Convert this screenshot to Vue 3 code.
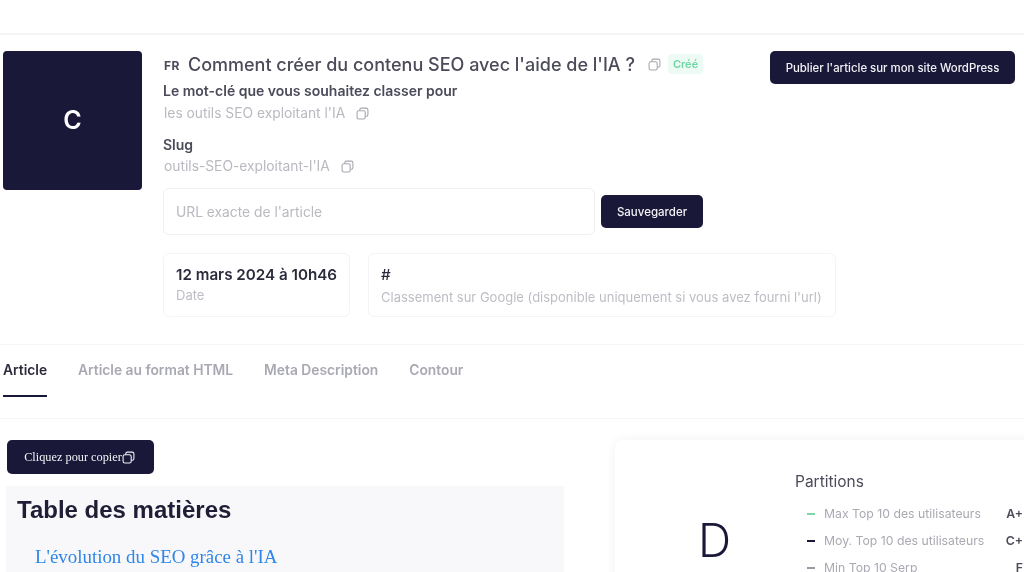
<script setup>
const tabs = ['Article', 'Article au format HTML', 'Meta Description', 'Contour']

const partitions = [
  { label: 'Max Top 10 des utilisateurs', grade: 'A+', color: '#7fd6ad' },
  { label: 'Moy. Top 10 des utilisateurs', grade: 'C+', color: '#1a1838' },
  { label: 'Min Top 10 Serp', grade: 'F', color: '#9a9aa6' },
]
</script>

<template>
  <div class="page">
    <header class="article-head">
      <div class="thumb">C</div>

      <div class="info">
        <div class="title-row">
          <span class="lang">FR</span>
          <h1 class="title">Comment créer du contenu SEO avec l'aide de l'IA ?</h1>
          <svg class="copy title-copy" viewBox="0 0 12 12"><rect x="1" y="3.5" width="7.5" height="7.5" rx="1.6" /><path d="M3.5 3.5V2.6A1.6 1.6 0 0 1 5.1 1h4.3A1.6 1.6 0 0 1 11 2.6v4.3a1.6 1.6 0 0 1-1.6 1.6h-.9" /></svg>
          <span class="status">Créé</span>
        </div>

        <div class="label keyword-label">Le mot-clé que vous souhaitez classer pour</div>
        <div class="value">
          les outils SEO exploitant l'IA
          <svg class="copy" viewBox="0 0 12 12"><rect x="1" y="3.5" width="7.5" height="7.5" rx="1.6" /><path d="M3.5 3.5V2.6A1.6 1.6 0 0 1 5.1 1h4.3A1.6 1.6 0 0 1 11 2.6v4.3a1.6 1.6 0 0 1-1.6 1.6h-.9" /></svg>
        </div>

        <div class="label slug-label">Slug</div>
        <div class="value slug-value">
          outils-SEO-exploitant-l'IA
          <svg class="copy" viewBox="0 0 12 12"><rect x="1" y="3.5" width="7.5" height="7.5" rx="1.6" /><path d="M3.5 3.5V2.6A1.6 1.6 0 0 1 5.1 1h4.3A1.6 1.6 0 0 1 11 2.6v4.3a1.6 1.6 0 0 1-1.6 1.6h-.9" /></svg>
        </div>

        <div class="url-row">
          <div class="url-input">URL exacte de l'article</div>
          <button class="btn save">Sauvegarder</button>
        </div>

        <div class="stats">
          <div class="stat date">
            <strong>12 mars 2024 à 10h46</strong>
            <span>Date</span>
          </div>
          <div class="stat rank">
            <strong>#</strong>
            <span>Classement sur Google (disponible uniquement si vous avez fourni l'url)</span>
          </div>
        </div>
      </div>

      <button class="btn publish">Publier l'article sur mon site WordPress</button>
    </header>

    <nav class="tabs">
      <a v-for="(tab, i) in tabs" :key="tab" class="tab" :class="{ active: i === 0 }">{{ tab }}</a>
    </nav>

    <section class="content">
      <div class="article">
        <button class="btn copy-btn">
          Cliquez pour copier<svg class="copy" viewBox="0 0 12 12"><rect x="1" y="3.5" width="7.5" height="7.5" rx="1.6" /><path d="M3.5 3.5V2.6A1.6 1.6 0 0 1 5.1 1h4.3A1.6 1.6 0 0 1 11 2.6v4.3a1.6 1.6 0 0 1-1.6 1.6h-.9" /></svg>
        </button>
        <div class="toc">
          <h2>Table des matières</h2>
          <a>L'évolution du SEO grâce à l'IA</a>
        </div>
      </div>

      <aside class="score">
        <div class="grade">D</div>
        <div class="partitions">
          <h3>Partitions</h3>
          <div v-for="p in partitions" :key="p.label" class="partition">
            <i :style="{ background: p.color }"></i>
            <span>{{ p.label }}</span>
            <b>{{ p.grade }}</b>
          </div>
        </div>
      </aside>
    </section>
  </div>
</template>

<style>
html, body {
  margin: 0;
  background: #fff;
}
</style>

<style scoped>
.page {
  width: 1024px;
  height: 572px;
  overflow: hidden;
  box-sizing: border-box;
  padding-top: 33px;
  font-family: Inter, "Liberation Sans", sans-serif;
  background: #fff;
  color: #1a1838;
  filter: blur(0.45px);
}

.article-head {
  display: flex;
  align-items: flex-start;
  border-top: 2px solid #f3f4f6;
  padding: 16px 0 0 3px;
  height: 312px;
  box-sizing: border-box;
  border-bottom: 1px solid #f5f5f7;
}

.thumb {
  flex: none;
  width: 139px;
  height: 139px;
  margin-right: 21px;
  padding-bottom: 1px;
  box-sizing: border-box;
  display: flex;
  align-items: center;
  justify-content: center;
  background: #1a1838;
  border-radius: 4px;
  color: #fff;
  font-size: 25px;
  font-weight: 600;
}

.info {
  flex: none;
  width: 606px;
}

.title-row {
  display: flex;
  align-items: center;
  height: 26px;
}

.lang {
  font-size: 12px;
  font-weight: 700;
  letter-spacing: 0.5px;
  color: #4b4b5a;
  margin: 2px 8px 0 1px;
}

.title {
  margin: 0;
  font-size: 18px;
  font-weight: 500;
  color: #4b4b5a;
  white-space: nowrap;
}

.title-copy {
  margin: 0 7px 0 13px;
}

.copy {
  width: 13px;
  height: 13px;
  fill: none;
  stroke: #a6a6ae;
  stroke-width: 1;
}

.status {
  display: inline-flex;
  align-items: center;
  height: 20px;
  padding: 0 5px;
  border-radius: 4px;
  background: #edfbf4;
  color: #6fd6a4;
  font-size: 11px;
  font-weight: 600;
}

.label {
  font-size: 14px;
  font-weight: 600;
  color: #4b4b5a;
  line-height: 18px;
}

.keyword-label {
  margin-top: 5px;
}

.slug-label {
  margin-top: 14px;
}

.value {
  display: flex;
  align-items: center;
  gap: 11px;
  margin-top: 4px;
  padding-left: 1px;
  font-size: 13.8px;
  line-height: 18px;
  color: #b9b9c1;
}

.slug-value {
  margin-top: 3px;
}

.url-row {
  display: flex;
  align-items: center;
  gap: 6px;
  margin-top: 13px;
}

.url-input {
  width: 432px;
  height: 47px;
  box-sizing: border-box;
  padding: 0 12px;
  display: flex;
  align-items: center;
  border: 1px solid #f0f0f3;
  border-radius: 6px;
  font-size: 13.8px;
  color: #b9b9c1;
}

.btn {
  border: 0;
  border-radius: 5px;
  background: #1a1838;
  color: #f2f2f6;
  font-family: inherit;
  font-size: 11.5px;
  font-weight: 500;
  padding: 0;
}

.save {
  width: 102px;
  height: 33px;
}

.publish {
  flex: none;
  width: 245px;
  height: 33px;
  margin-left: 1px;
  font-size: 11.4px;
}

.stats {
  display: flex;
  gap: 18px;
  margin-top: 18px;
}

.stat {
  flex: none;
  height: 64px;
  box-sizing: border-box;
  display: flex;
  flex-direction: column;
  border: 1px solid #f4f4f6;
  border-radius: 6px;
  padding: 12px 12px 0;
  white-space: nowrap;
}

.stat strong {
  font-size: 15.2px;
  font-weight: 600;
  line-height: 18px;
  color: #2b2b3c;
}

.stat span {
  font-size: 13px;
  line-height: 16px;
  color: #bdbdc5;
}

.date {
  width: 187px;
}

.date span {
  margin-top: 3px;
}

.rank {
  width: 468px;
}

.rank strong {
  font-weight: 500;
}

.rank span {
  margin-top: 5px;
}

.tabs {
  display: flex;
  gap: 31px;
  height: 74px;
  box-sizing: border-box;
  padding: 0 3px;
  border-bottom: 1px solid #f5f5f7;
}

.tab {
  height: 52px;
  box-sizing: border-box;
  padding-top: 16px;
  font-size: 13.8px;
  line-height: 18px;
  font-weight: 600;
  color: #a9a9b3;
}

.tab.active {
  color: #2b2b3c;
  border-bottom: 2px solid #1a1838;
}

.content {
  display: flex;
  align-items: flex-start;
  padding: 21px 0 0 6px;
}

.article {
  flex: none;
  width: 558px;
}

.copy-btn {
  width: 147px;
  height: 34px;
  margin-left: 1px;
  padding-right: 2px;
  display: flex;
  align-items: center;
  justify-content: center;
  font-family: "Liberation Serif", serif;
  font-size: 12.3px;
  font-weight: 400;
}

.copy-btn .copy {
  stroke: #f2f2f6;
}

.toc {
  margin-top: 12px;
  height: 200px;
  padding: 9px 11px;
  box-sizing: border-box;
  background: #f8f8fa;
}

.toc h2 {
  margin: 0;
  font-family: "Liberation Sans", sans-serif;
  font-size: 24px;
  font-weight: 700;
  line-height: 30px;
  color: #1f1e36;
}

.toc a {
  display: block;
  margin: 20px 0 0 18px;
  font-family: "Liberation Serif", serif;
  font-size: 18.9px;
  line-height: 24px;
  color: #2e86e8;
}

.score {
  flex: none;
  display: flex;
  width: 420px;
  height: 200px;
  margin-left: 51px;
  border-radius: 8px;
  box-shadow: 0 0 12px rgba(30, 30, 60, 0.06);
}

.grade {
  flex: none;
  width: 180px;
  padding-top: 72px;
  padding-left: 83px;
  box-sizing: border-box;
  font-size: 46px;
  font-weight: 300;
  line-height: 56px;
  color: #1a1838;
}

.partitions {
  flex: none;
  width: 228px;
  padding-top: 32px;
}

.partitions h3 {
  margin: 0 0 8px;
  font-size: 15.5px;
  font-weight: 400;
  line-height: 20px;
  color: #4b4b5a;
}

.partition {
  display: flex;
  align-items: center;
  height: 27px;
  padding-left: 12px;
  font-size: 12.25px;
  color: #a9a9b3;
}

.partition i {
  width: 8px;
  height: 2px;
  margin-right: 9px;
}

.partition b {
  margin-left: auto;
  font-weight: 600;
  color: #4b4b5a;
}
</style>
